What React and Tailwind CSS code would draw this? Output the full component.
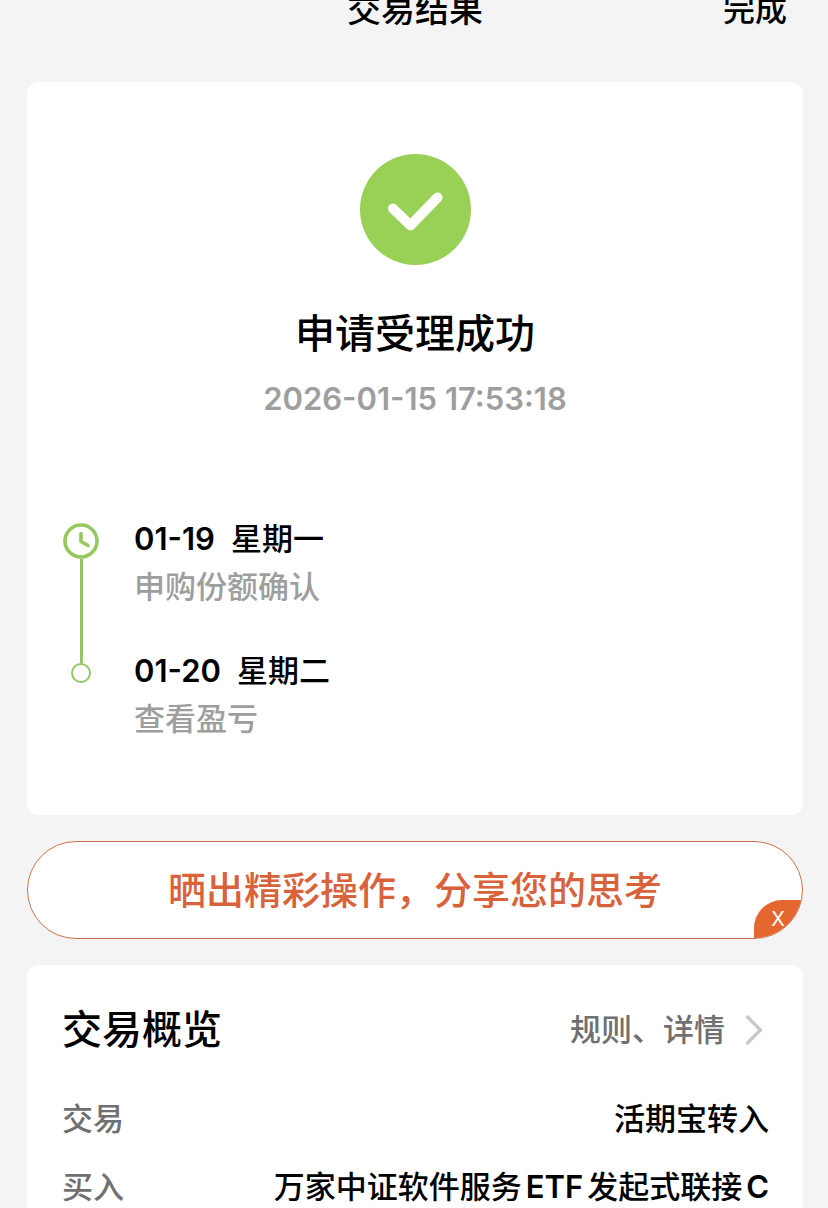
import React from 'react'

const steps = [
    { date: '01-19', day: '星期一', text: '申购份额确认' },
    { date: '01-20', day: '星期二', text: '查看盈亏' },
]

const details = [
    { label: '交易', value: '活期宝转入' },
    {
        label: '买入',
        value: (
            <>
                万家中证软件服务<span className="mx-1 font-semibold">ETF</span>发起式联接<span className="ml-1 font-semibold">C</span>
            </>
        ),
    },
]

function CheckIcon() {
    return (
        <svg className="size-[112px]" viewBox="0 0 112 112" fill="none" aria-hidden="true">
            <circle cx="56.5" cy="55.5" r="55.5" fill="#98d156" />
            <path d="M34 54.5 L51.5 71.5 L78.5 43.5" stroke="#fff" strokeWidth="10" strokeLinecap="round" strokeLinejoin="round" />
        </svg>
    )
}

function ClockIcon() {
    return (
        <svg className="size-9 shrink-0" viewBox="0 0 36 36" fill="none" stroke="#95c95f" strokeWidth="3.6" aria-hidden="true">
            <circle cx="18" cy="18" r="16" />
            <path d="M18 10.5 V18.5 L25 22.5" strokeLinecap="round" strokeLinejoin="round" />
        </svg>
    )
}

function Timeline() {
    return (
        <ol className="mt-24">
            {steps.map((step, i) => (
                <li key={step.date} className="flex gap-[35px]">
                    <div className="flex w-9 flex-col items-center">
                        {i === 0 ? (
                            <>
                                <div className="h-2 shrink-0" />
                                <ClockIcon />
                                <div className="w-[3px] flex-1 bg-[#95c46a]" />
                            </>
                        ) : (
                            <>
                                <div className="h-4 w-[3px] bg-[#95c46a]" />
                                <div className="size-5 rounded-full border-2 border-[#95c46a]" />
                            </>
                        )}
                    </div>
                    <div className={i === 0 ? 'pb-9' : ''}>
                        <div className="flex gap-4 text-[31px] leading-12 font-medium text-black">
                            <span className="font-semibold">{step.date}</span>
                            <span>{step.day}</span>
                        </div>
                        <p className="text-[31px] leading-12 font-medium text-[#9e9e9e]">{step.text}</p>
                    </div>
                </li>
            ))}
        </ol>
    )
}

function App() {
    return (
        <div className="flex min-h-screen flex-col bg-[#f4f4f4] pr-[25px] pl-[27px] font-['Inter','Noto_Sans_CJK_SC',sans-serif] text-black">
            <header className="grid h-[82px] shrink-0 grid-cols-3 items-start font-medium">
                <h1 className="col-start-2 text-center text-[34px] leading-5 font-medium whitespace-nowrap">交易结果</h1>
                <button type="button" className="mr-4 justify-self-end text-[32px] leading-5">完成</button>
            </header>

            <section className="rounded-xl bg-white px-9 py-[72px]">
                <div className="flex flex-col items-center">
                    <CheckIcon />
                    <h2 className="mt-11 text-[40px] leading-12 font-medium">申请受理成功</h2>
                    <p className="mt-[21px] text-[31px] leading-10 font-semibold text-[#9e9e9e]">2026-01-15 17:53:18</p>
                </div>
                <Timeline />
            </section>

            <div className="relative mt-[26px] overflow-hidden rounded-full border border-[#c9714a] bg-white">
                <button type="button" className="block w-full text-center text-[38px] leading-24 font-medium text-[#d9623a]">
                    晒出精彩操作，分享您的思考
                </button>
                <button type="button" aria-label="关闭" className="absolute right-0 bottom-0 h-[38px] w-12 rounded-tl-[28px] bg-[#e4672f] text-[20px] leading-9 text-white">
                    X
                </button>
            </div>

            <section className="mt-[26px] flex-1 rounded-t-xl bg-white pt-[41px] pr-[34px] pl-[35px]">
                <div className="flex items-center justify-between">
                    <h2 className="text-[40px] leading-12 font-medium">交易概览</h2>
                    <a href="#details" className="flex items-center gap-5 pr-1.5 text-[31px] leading-12 font-medium text-[#707070]">
                        规则、详情
                        <svg className="h-8 w-[18px]" viewBox="0 0 18 32" fill="none" stroke="#c8c8c8" strokeWidth="3.4" aria-hidden="true">
                            <path d="M1.5 2 L15.5 16 L1.5 30" />
                        </svg>
                    </a>
                </div>
                <dl id="details" className="mt-[45px] flex flex-col gap-7 text-[31px] leading-10 font-medium">
                    {details.map((item) => (
                        <div key={item.label} className="flex justify-between">
                            <dt className="text-[#707070]">{item.label}</dt>
                            <dd>{item.value}</dd>
                        </div>
                    ))}
                </dl>
            </section>
        </div>
    )
}

export default App
